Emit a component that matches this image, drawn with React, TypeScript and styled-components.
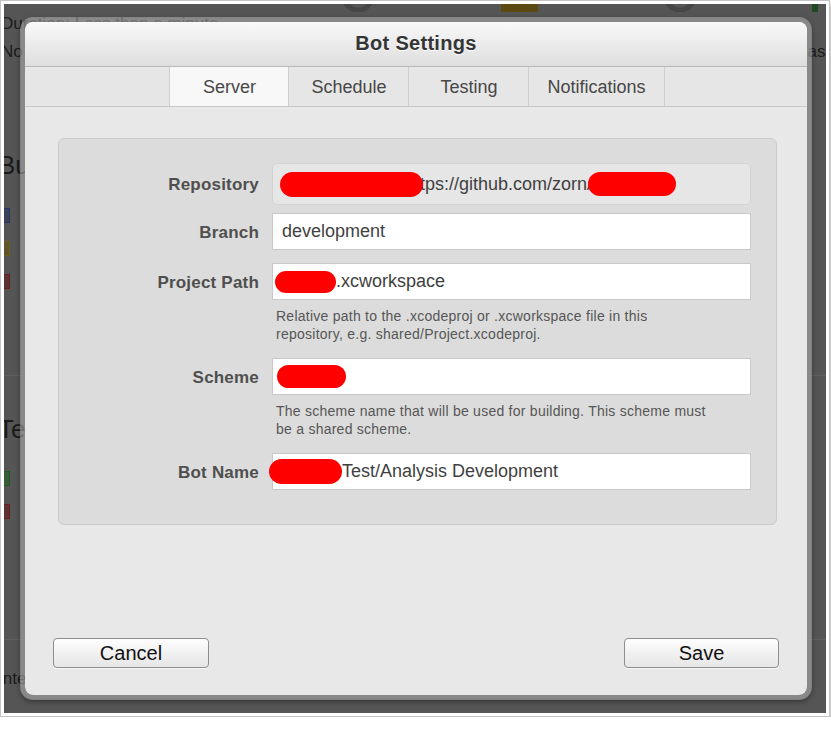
import React from "react";
import styled, { createGlobalStyle } from "styled-components";

const GlobalStyle = createGlobalStyle`
  html, body { margin: 0; padding: 0; background: #ffffff; }
  body { font-family: "Liberation Sans", Arial, sans-serif; }
  * { box-sizing: border-box; }
`;

const Frame = styled.div`
  width: 830px;
  height: 717px;
  border: 1px solid #c4c4c4;
  padding: 3px;
  background: #ffffff;
  box-shadow: 0 4px 5px rgba(0, 0, 0, 0.45);
`;

const Screen = styled.div`
  position: relative;
  width: 100%;
  height: 100%;
  background: #555555;
  overflow: hidden;
`;

/* ---------- dimmed page behind the sheet ---------- */

const Backdrop = styled.div`
  display: flex;
  flex-direction: column;
  color: #1b1b1b;
`;

const BackText = styled.div<{ $mt: number; $size: number; $ml?: number }>`
  margin-top: ${(p) => p.$mt}px;
  margin-left: ${(p) => p.$ml ?? -3}px;
  font-size: ${(p) => p.$size}px;
  line-height: ${(p) => Math.round(p.$size * 1.18)}px;
  white-space: nowrap;
`;

const BackRow = styled.div`
  display: flex;
  justify-content: space-between;
  margin-top: 8px;
  font-size: 17px;
  line-height: 20px;
  white-space: nowrap;
`;

const Legend = styled.div<{ $mt: number; $fill: string; $edge: string }>`
  margin-top: ${(p) => p.$mt}px;
  margin-left: -4px;
  width: 10px;
  height: 15px;
  background: ${(p) => p.$fill};
  border: 1px solid ${(p) => p.$edge};
`;

const BackRule = styled.div<{ $mt: number }>`
  margin-top: ${(p) => p.$mt}px;
  height: 1px;
  background: #5f5f5f;
`;

/* ---------- the sheet ---------- */

const Sheet = styled.div`
  position: absolute;
  left: 16px;
  top: 13px;
  width: 792px;
  height: 683px;
  border: 5px solid rgba(180, 180, 180, 0.55);
  border-radius: 13px;
  background: #e8e8e8;
  background-clip: padding-box;
  box-shadow: 0 2px 5px rgba(0, 0, 0, 0.35);
  display: flex;
  flex-direction: column;
  overflow: hidden;
`;

const TitleBar = styled.header`
  flex: 0 0 45px;
  padding-bottom: 2px;
  border-bottom: 1px solid #b9b9b9;
  background: linear-gradient(#f9f9f9, #dedede);
  display: flex;
  align-items: center;
  justify-content: center;
  font-size: 20px;
  font-weight: bold;
  letter-spacing: 0.3px;
  color: #353535;
  text-shadow: 0 1px 0 #ffffff;
`;

const TabBar = styled.nav`
  flex: 0 0 40px;
  border-bottom: 1px solid #c8c8c8;
  background: #e6e6e6;
  display: flex;
  justify-content: center;
  padding-left: 2px;
`;

const Tab = styled.div<{ $active?: boolean }>`
  min-width: 120px;
  padding: 1px 18px 0;
  display: flex;
  align-items: center;
  justify-content: center;
  border-right: 1px solid #cfcfcf;
  background: ${(p) => (p.$active ? "#f8f8f8" : "transparent")};
  font-size: 18px;
  color: #474747;
  &:first-child { border-left: 1px solid #cfcfcf; }
`;

const Body = styled.main`
  flex: 1;
  display: flex;
  flex-direction: column;
  padding: 31px 30px 27px 33px;
`;

const Panel = styled.section`
  display: flex;
  flex-direction: column;
  padding: 24px 25px 34px 0;
  background: #dcdcdc;
  border: 1px solid #cbcbcb;
  border-radius: 6px;
`;

const FieldRow = styled.div<{ $mt: number }>`
  display: grid;
  grid-template-columns: 200px 479px;
  column-gap: 13px;
  align-items: center;
  margin-top: ${(p) => p.$mt}px;
`;

const Label = styled.label`
  padding-top: 2px;
  text-align: right;
  font-size: 17px;
  font-weight: bold;
  letter-spacing: 0.2px;
  color: #4f4f4f;
`;

const Field = styled.div<{ $readonly?: boolean }>`
  height: ${(p) => (p.$readonly ? 42 : 37)}px;
  display: flex;
  align-items: center;
  padding: 0 9px;
  background: ${(p) => (p.$readonly ? "#e6e6e6" : "#ffffff")};
  border: 1px solid ${(p) => (p.$readonly ? "#d3d3d3" : "#c9c9c9")};
  border-radius: ${(p) => (p.$readonly ? 5 : 0)}px;
  font-size: 18px;
  color: #3f3f3f;
  white-space: nowrap;
  overflow: visible;
`;

const Value = styled.span<{ $ml?: number }>`
  margin-left: ${(p) => p.$ml ?? 0}px;
`;

const Redaction = styled.span<{ $w: number; $h: number; $ml: number }>`
  position: relative;
  z-index: 1;
  flex: 0 0 auto;
  display: inline-block;
  width: ${(p) => p.$w}px;
  height: ${(p) => p.$h}px;
  margin-left: ${(p) => p.$ml}px;
  background: #ff0000;
  border-radius: 999px;
  filter: blur(0.7px);
`;

const Help = styled.p<{ $mt: number }>`
  margin: ${(p) => p.$mt}px 0 0 217px;
  max-width: 440px;
  font-size: 14px;
  letter-spacing: 0.25px;
  line-height: 18px;
  color: #565656;
`;

const Footer = styled.footer`
  margin: auto -2px 0 -5px;
  display: flex;
  justify-content: space-between;
`;

const Button = styled.button<{ $w: number }>`
  width: ${(p) => p.$w}px;
  height: 30px;
  border: 1px solid #8e8e8e;
  border-radius: 4px;
  background: linear-gradient(#fefefe, #f1f1f1 50%, #e6e6e6);
  box-shadow: 0 1px 0 rgba(255, 255, 255, 0.6);
  font-family: "Liberation Sans", Arial, sans-serif;
  font-size: 20px;
  color: #111111;
  padding: 0;
`;

export default function App() {
  return (
    <>
      <GlobalStyle />
      <Frame>
        <Screen>
          <Backdrop>
            <svg width="822" height="8" viewBox="0 0 822 8" style={{ display: "block" }}>
              <circle cx="354" cy="-8" r="14" fill="none" stroke="#464646" strokeWidth="5" />
              <circle cx="676" cy="-8" r="14" fill="none" stroke="#464646" strokeWidth="5" />
              <rect x="497" y="0" width="37" height="9" fill="#5b4912" />
              <rect x="808" y="0" width="6" height="9" fill="#1f4a1f" />
            </svg>
            <BackText $mt={2} $size={17}>Duration: Less than a minute</BackText>
            <BackRow>
              <span style={{ marginLeft: -3 }}>No r</span>
              <span style={{ marginRight: -8 }}>Pass</span>
            </BackRow>
            <BackText $mt={88} $size={26} $ml={-6}>Builds</BackText>
            <Legend $mt={27} $fill="#3b4258" $edge="#26356a" />
            <Legend $mt={18} $fill="#5e5430" $edge="#6e5d12" />
            <Legend $mt={18} $fill="#5a3434" $edge="#6a1e1e" />
            <BackRule $mt={86} />
            <BackText $mt={38} $size={26} $ml={-6}>Tests</BackText>
            <Legend $mt={26} $fill="#3a5a3a" $edge="#1f5a1f" />
            <Legend $mt={18} $fill="#5a3434" $edge="#6a1e1e" />
            <BackRule $mt={120} />
            <BackText $mt={29} $size={17} $ml={-6}>Integrations</BackText>
          </Backdrop>

          <Sheet>
            <TitleBar>Bot Settings</TitleBar>
            <TabBar>
              <Tab $active>Server</Tab>
              <Tab>Schedule</Tab>
              <Tab>Testing</Tab>
              <Tab>Notifications</Tab>
            </TabBar>
            <Body>
              <Panel>
                <FieldRow $mt={0}>
                  <Label>Repository</Label>
                  <Field $readonly>
                    <Redaction $w={143} $h={25} $ml={-2} />
                    <Value $ml={-3}>tps://github.com/zorn/</Value>
                    <Redaction $w={88} $h={24} $ml={-4} />
                  </Field>
                </FieldRow>
                <FieldRow $mt={8}>
                  <Label>Branch</Label>
                  <Field>
                    <Value>development</Value>
                  </Field>
                </FieldRow>
                <FieldRow $mt={13}>
                  <Label>Project Path</Label>
                  <Field>
                    <Redaction $w={61} $h={22} $ml={-7} />
                    <Value>.xcworkspace</Value>
                  </Field>
                </FieldRow>
                <Help $mt={7}>
                  Relative path to the .xcodeproj or .xcworkspace file in this repository, e.g. shared/Project.xcodeproj.
                </Help>
                <FieldRow $mt={15}>
                  <Label>Scheme</Label>
                  <Field>
                    <Redaction $w={69} $h={23} $ml={-5} />
                  </Field>
                </FieldRow>
                <Help $mt={7}>
                  The scheme name that will be used for building. This scheme must be a shared scheme.
                </Help>
                <FieldRow $mt={15}>
                  <Label>Bot Name</Label>
                  <Field>
                    <Redaction $w={73} $h={25} $ml={-13} />
                    <Value>Test/Analysis Development</Value>
                  </Field>
                </FieldRow>
              </Panel>
              <Footer>
                <Button $w={156}>Cancel</Button>
                <Button $w={155}>Save</Button>
              </Footer>
            </Body>
          </Sheet>
        </Screen>
      </Frame>
    </>
  );
}
